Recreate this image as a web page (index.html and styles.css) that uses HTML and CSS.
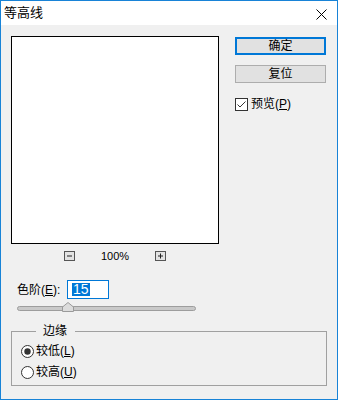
FILE: index.html
```html
<!DOCTYPE html>
<html lang="zh-CN">
<head>
    <meta charset="UTF-8">
    <meta name="viewport" content="width=device-width, initial-scale=1.0">
    <title>等高线</title>
    <link rel="stylesheet" href="styles.css">
</head>
<body>
    <div class="window">
        <div class="titlebar">
            <span class="title">等高线</span>
            <svg class="close" width="11" height="11" viewBox="0 0 11 11">
                <path d="M0.5 0.5 L10.5 10.5 M10.5 0.5 L0.5 10.5" stroke="#000" stroke-width="1" fill="none"/>
            </svg>
        </div>

        <div class="dialog">
            <div class="main">
                <div class="left">
                    <div class="preview"></div>

                    <div class="zoom-row">
                        <svg class="zoom-btn" width="11" height="10" viewBox="0 0 11 10">
                            <rect x="0.5" y="0.5" width="10" height="9" fill="#e3e3e3" stroke="#555"/>
                            <path d="M3 5 H8" stroke="#222"/>
                        </svg>
                        <span class="zoom-value">100%</span>
                        <svg class="zoom-btn" width="11" height="10" viewBox="0 0 11 10">
                            <rect x="0.5" y="0.5" width="10" height="9" fill="#e3e3e3" stroke="#555"/>
                            <path d="M3 5 H8 M5.5 2.5 V7.5" stroke="#222"/>
                        </svg>
                    </div>

                    <div class="level-row">
                        <span class="level-label">色阶(<u>E</u>):</span>
                        <div class="level-input"><span class="selected">15</span></div>
                    </div>

                    <div class="slider">
                        <div class="track"></div>
                        <svg class="thumb" width="12" height="10" viewBox="0 0 12 10">
                            <polygon points="0.5,9.5 0.5,5 6,0.5 11.5,5 11.5,9.5" fill="#dcdcdc" stroke="#9a9a9a"/>
                        </svg>
                    </div>
                </div>

                <div class="right">
                    <button class="btn btn-default">确定</button>
                    <button class="btn">复位</button>
                    <label class="check">
                        <svg class="check-box" width="13" height="13" viewBox="0 0 13 13">
                            <rect x="0.5" y="0.5" width="12" height="12" fill="#fff" stroke="#333"/>
                            <path d="M2.5 6.5 L5 9 L10.5 3.5" stroke="#333" fill="none"/>
                        </svg>
                        <span>预览(<u>P</u>)</span>
                    </label>
                </div>
            </div>

            <fieldset class="group">
                <legend>边缘</legend>
                <label class="radio">
                    <svg width="13" height="13" viewBox="0 0 13 13">
                        <circle cx="6.5" cy="6.5" r="6" fill="#fff" stroke="#333"/>
                        <circle cx="6.5" cy="6.5" r="3.2" fill="#333"/>
                    </svg>
                    <span>较低(<u>L</u>)</span>
                </label>
                <label class="radio">
                    <svg width="13" height="13" viewBox="0 0 13 13">
                        <circle cx="6.5" cy="6.5" r="6" fill="#fff" stroke="#333"/>
                    </svg>
                    <span>较高(<u>U</u>)</span>
                </label>
            </fieldset>
        </div>
    </div>
</body>
</html>
```

FILE: styles.css
```css
* {
    box-sizing: border-box;
}

body {
    margin: 0;
    font-family: "Liberation Sans", "Noto Sans CJK SC", sans-serif;
    font-size: 12px;
    color: #000;
    background: #f0f0f0;
}

.window {
    width: 338px;
    height: 400px;
    border: 1px solid #1883d7;
    background: #f0f0f0;
    display: flex;
    flex-direction: column;
}

.titlebar {
    height: 24px;
    background: #fff;
    display: flex;
    align-items: center;
    justify-content: space-between;
    padding: 0 10px 0 3px;
}

.title {
    font-size: 13px;
    line-height: 16px;
}

.close {
    display: block;
    margin-top: 2px;
}

.dialog {
    padding: 11px 0 0 10px;
}

.main {
    display: flex;
}

.left {
    width: 208px;
}

.preview {
    height: 208px;
    background: #fff;
    border: 1px solid #000;
}

.zoom-row {
    margin-top: 7px;
    height: 10px;
    display: flex;
    align-items: center;
    justify-content: center;
    gap: 26px;
}

.zoom-btn {
    display: block;
}

.zoom-value {
    font-size: 11px;
    line-height: 10px;
}

.level-row {
    margin-top: 19px;
    display: flex;
    align-items: center;
    padding-left: 6px;
}

.level-label {
    width: 50px;
    line-height: 14px;
}

.level-input {
    width: 42px;
    height: 19px;
    background: #fff;
    border: 1px solid #0078d7;
    padding: 2px 0 0 4px;
}

.selected {
    display: inline-block;
    background: #0078d7;
    color: #fff;
    font-size: 14px;
    line-height: 13px;
    padding: 0 1px;
}

.slider {
    position: relative;
    margin: 3px 0 0 6px;
    width: 179px;
    height: 10px;
}

.track {
    position: absolute;
    left: 0;
    right: 0;
    top: 4px;
    height: 5px;
    border-radius: 3px;
    background: #c9c9c9;
    border: 1px solid #9d9d9d;
}

.thumb {
    position: absolute;
    left: 45px;
    top: 0;
}

.right {
    margin-left: 16px;
    padding-top: 1px;
    width: 91px;
    display: flex;
    flex-direction: column;
}

.btn {
    height: 18px;
    padding: 0;
    font-family: inherit;
    font-size: 12px;
    line-height: 14px;
    color: #000;
    background: #e1e1e1;
    border: 1px solid #adadad;
}

.btn-default {
    border: 2px solid #0078d7;
}

.btn + .btn {
    margin-top: 10px;
}

.check {
    margin-top: 14px;
    display: flex;
    align-items: center;
    gap: 3px;
    line-height: 14px;
}

.check-box {
    display: block;
}

.group {
    margin: 13px 0 0 0;
    width: 316px;
    border: 1px solid #a0a0a0;
    padding: 8px 0 6px 9px;
}

.group legend {
    margin-left: 15px;
    padding: 0 8px 0 7px;
    line-height: 12px;
}

.radio {
    display: flex;
    align-items: center;
    gap: 2px;
    height: 13px;
    line-height: 13px;
}

.radio svg {
    display: block;
}

.radio + .radio {
    margin-top: 8px;
}
```
